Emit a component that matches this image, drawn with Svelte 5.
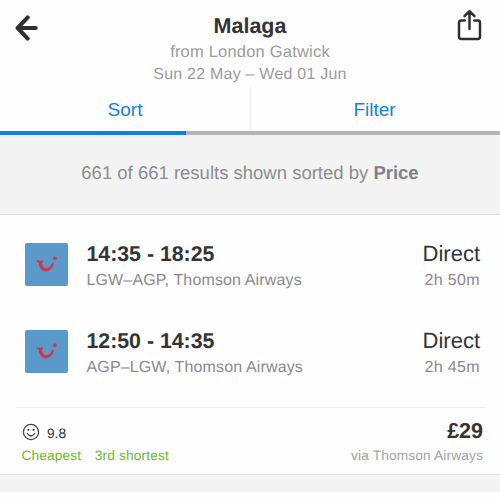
<script lang="ts">
	type Leg = {
		times: string;
		route: string;
		stops: string;
		duration: string;
	};

	const legs: Leg[] = [
		{ times: "14:35 - 18:25", route: "LGW–AGP, Thomson Airways", stops: "Direct", duration: "2h 50m" },
		{ times: "12:50 - 14:35", route: "AGP–LGW, Thomson Airways", stops: "Direct", duration: "2h 45m" }
	];

	// percentage of providers that have answered so far
	let progress = $state(37.1);
</script>

<div class="screen">
	<header>
		<button class="icon back" aria-label="Back">
			<svg width="26" height="28" viewBox="0 0 26 28">
				<path d="M12.7 3.4 2.6 14l10.1 10.6M3.2 14H20.7" />
			</svg>
		</button>
		<div class="heading">
			<h1>Malaga</h1>
			<p class="from">from London Gatwick</p>
			<p class="dates">Sun 22 May – Wed 01 Jun</p>
		</div>
		<button class="icon share" aria-label="Share">
			<svg width="26" height="34" viewBox="0 0 26 34">
				<path d="M7.7 12.6H4.2Q2 12.6 2 14.8V28.7Q2 30.9 4.2 30.9H20.8Q23 30.9 23 28.7V14.8Q23 12.6 20.8 12.6H17.3M12.5 21V4M7.5 8.2 12.5 3.2l5 5" />
			</svg>
		</button>
	</header>

	<nav>
		<button>Sort</button>
		<button>Filter</button>
	</nav>
	<div class="progress"><div class="bar" style="width: {progress}%"></div></div>

	<p class="summary">661 of 661 results shown sorted by <b>Price</b></p>

	<article>
		{#each legs as leg (leg.route)}
			<div class="leg">
				<svg class="logo" width="43" height="43" viewBox="0 0 43 43">
					<rect width="43" height="43" rx="2" fill="#5b99ca" />
					<path
						d="M11 17.6H18V19.6H16.8C17.4 26.8 24.5 27.6 27.2 19.6L29 20.6C26.2 31.2 14.4 31 13.8 19.8Q12 19.8 11 17.6Z"
						fill="#d2354b"
					/>
					<circle cx="29.8" cy="15.3" r="1.9" fill="#d2354b" />
				</svg>
				<div class="flight">
					<strong>{leg.times}</strong>
					<span>{leg.route}</span>
				</div>
				<div class="stops">
					<strong>{leg.stops}</strong>
					<span>{leg.duration}</span>
				</div>
			</div>
		{/each}

		<footer>
			<div>
				<div class="rating">
					<svg width="18" height="18" viewBox="0 0 18 18">
						<circle cx="9" cy="9" r="7.6" />
						<path d="M5 10.2Q9 15.8 13 10.2" />
						<circle class="eye" cx="6.4" cy="6.8" r="1.1" />
						<circle class="eye" cx="11.6" cy="6.8" r="1.1" />
					</svg>
					<span>9.8</span>
				</div>
				<div class="tags">
					<span>Cheapest</span>
					<span>3rd shortest</span>
				</div>
			</div>
			<div class="price">
				<strong>£29</strong>
				<span>via Thomson Airways</span>
			</div>
		</footer>
	</article>
	<div class="gap"></div>
</div>

<style>
	:global(body) {
		background: #fff;
	}

	.screen {
		width: 500px;
		height: 500px;
		overflow: hidden;
		background: #fefefe;
		font-family: "Liberation Sans", Arial, sans-serif;
		text-rendering: geometricPrecision;
		color: #343438;
	}

	h1,
	p {
		margin: 0;
	}

	button {
		padding: 0;
		border: 0;
		background: none;
		font: inherit;
	}

	header {
		display: flex;
		justify-content: space-between;
		height: 87px;
		box-sizing: border-box;
		padding: 8px 17px 0 15px;
	}

	.icon {
		display: flex;
		width: 26px;
		height: 34px;
	}

	.icon path {
		fill: none;
		stroke: #303034;
		stroke-linejoin: round;
		stroke-linecap: round;
	}

	.back {
		padding-top: 6px;
	}

	.back path {
		stroke-width: 4;
	}

	.share path {
		stroke-width: 2.5;
	}

	.heading {
		padding: 5px 0 0 2px;
		text-align: center;
		font-size: 16px;
		line-height: 22px;
		color: #9b9b9d;
	}

	h1 {
		margin-bottom: 2px;
		font-size: 21.5px;
		line-height: 26px;
		color: #343438;
	}

	.from {
		font-size: 16.5px;
		letter-spacing: 0.2px;
	}

	.dates {
		padding-top: 1px;
		letter-spacing: 0.22px;
	}

	nav {
		display: grid;
		grid-template-columns: 1fr 1fr;
		height: 44px;
	}

	nav button {
		padding-top: 2px;
		font-size: 19px;
		line-height: 42px;
		color: #1581e4;
	}

	nav button + button {
		padding-right: 2px;
		border-left: 1px solid #ececec;
	}

	.progress {
		height: 4px;
		background: #b4b5b4;
	}

	.bar {
		height: 100%;
		background: #0f7fe2;
	}

	.summary {
		height: 80px;
		box-sizing: border-box;
		border-bottom: 1px solid #dedede;
		background: #f3f3f3;
		font-size: 18.5px;
		line-height: 75px;
		text-align: center;
		color: #8d8d90;
	}

	.summary b {
		color: #808086;
	}

	article {
		padding: 28px 15px 0 16px;
	}

	.leg {
		display: flex;
		height: 87px;
		padding: 0 5px 0 9px;
	}

	.logo {
		margin-right: 18.5px;
	}

	.leg strong,
	.leg span {
		display: block;
	}

	.leg strong {
		font-size: 21.3px;
		line-height: 22px;
	}

	.leg span {
		margin-top: 5px;
		font-size: 16px;
		line-height: 22px;
		letter-spacing: 0.14px;
		color: #8b8b8e;
	}

	.flight {
		flex: 1;
	}

	.stops {
		text-align: right;
	}

	.leg .stops strong {
		font-size: 22px;
		font-weight: 400;
	}

	.leg .stops span {
		letter-spacing: 0.35px;
	}

	footer {
		display: flex;
		justify-content: space-between;
		height: 67px;
		box-sizing: border-box;
		margin-top: -10px;
		padding: 13px 2px 0 6px;
		border-top: 1px solid #ededed;
		font-size: 13.7px;
		line-height: 20px;
	}

	.rating {
		display: flex;
		gap: 7px;
		height: 25px;
	}

	.rating span {
		padding-top: 3px;
	}

	.rating svg {
		margin-top: 2px;
		fill: none;
		stroke: #48484c;
		stroke-width: 1.3;
	}

	.rating .eye {
		fill: #48484c;
		stroke: none;
	}

	.tags {
		display: flex;
		gap: 13.5px;
		margin-left: -0.5px;
		color: #6abf1e;
		letter-spacing: 0.15px;
	}

	.price {
		text-align: right;
		color: #a3a3a6;
	}

	.price strong,
	.price span {
		display: block;
	}

	.price strong {
		height: 25px;
		font-size: 21.5px;
		color: #343438;
	}

	.price span {
		letter-spacing: 0.15px;
	}

	.gap {
		height: 18px;
		box-sizing: border-box;
		border-top: 1px solid #dedede;
		background: #f3f3f3;
	}
</style>
